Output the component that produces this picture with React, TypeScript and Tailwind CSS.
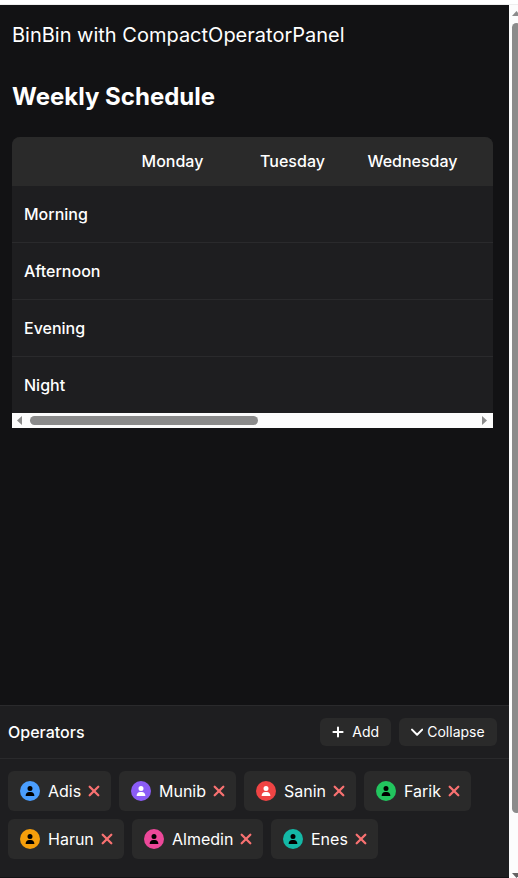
import { FaUser } from "react-icons/fa6";

const days = ["Monday", "Tuesday", "Wednesday"];
const shifts = ["Morning", "Afternoon", "Evening", "Night"];
const operators = [
  { name: "Adis", width: "w-[103px]", dot: "bg-[#4a9eff] text-black" },
  { name: "Munib", width: "w-[117px]", dot: "bg-[#8b5cf6] text-white" },
  { name: "Sanin", width: "w-[112px]", dot: "bg-[#ef4444] text-white" },
  { name: "Farik", width: "w-[107px]", dot: "bg-[#22c55e] text-black" },
  { name: "Harun", width: "w-[116px]", dot: "bg-[#f59e0b] text-black" },
  { name: "Almedin", width: "w-[131px]", dot: "bg-[#ec4899] text-black" },
  { name: "Enes", width: "w-[107px]", dot: "bg-[#14b8a6] text-black" },
];

function PlusIcon() {
  return (
    <svg className="h-[14px] w-[12.25px] shrink-0" viewBox="0 0 12.25 14" fill="none" stroke="currentColor" strokeWidth="2" strokeLinecap="round">
      <path d="M6 2.4v9.2M1.4 7h9.2" />
    </svg>
  );
}

function ChevronIcon() {
  return (
    <svg className="h-[14px] w-[12.25px] shrink-0" viewBox="0 0 12.25 14" fill="none" stroke="currentColor" strokeWidth="2" strokeLinecap="round" strokeLinejoin="round">
      <path d="m1 4.6 5.1 5.1 5.1-5.1" />
    </svg>
  );
}

function CrossIcon() {
  return (
    <svg className="ml-1 size-[18px] shrink-0 text-[#f87171]" viewBox="0 0 18 18" fill="none" stroke="currentColor" strokeWidth="2.3" strokeLinecap="round">
      <path d="m4.7 4.7 8.6 8.6m0-8.6-8.6 8.6" />
    </svg>
  );
}

function Schedule() {
  return (
    <div className="mt-6 ml-3 w-[481px] overflow-hidden rounded-t-lg bg-[#1e1e20] font-medium">
      <div className="flex h-[49px] items-center bg-[#2a2a2a] pb-px pl-[100.5px]">
        {days.map((d) => (
          <div key={d} className="w-[120px] text-center">{d}</div>
        ))}
      </div>
      {shifts.map((s, i) => (
        <div key={s} className={`flex items-center pl-3 ${i < 3 ? "h-[57px] border-b border-[#2a2a2c]" : "h-[56px]"}`}>{s}</div>
      ))}
      <div className="flex h-[15px] items-center bg-[#fcfcfc] text-[#8b8b8b]">
        <svg width="18" height="15" fill="currentColor"><path d="M5 7.5 10 3v9z" /></svg>
        <div className="h-[9px] w-[228px] rounded-full bg-[#8b8b8b]" />
        <svg className="ml-auto" width="18" height="15" fill="currentColor"><path d="M12 7.5 7 3v9z" /></svg>
      </div>
    </div>
  );
}

function OperatorPanel() {
  return (
    <section className="mt-auto h-[173px] shrink-0 border-y border-t-[#2a2a2c] border-b-[#121214] bg-[#1e1e20]">
      <header className="flex h-[53px] items-center gap-2 border-b border-[#2a2a2c] pr-3 pl-2">
        <h3 className="mr-auto font-medium">Operators</h3>
        <button className="flex h-7 w-[71px] items-center gap-2 rounded-md bg-[#2a2a2a] pl-3 text-sm">
          <PlusIcon />Add
        </button>
        <button className="flex h-7 w-[98px] items-center gap-1 rounded-md bg-[#2a2a2a] pl-3 text-sm">
          <ChevronIcon />Collapse
        </button>
      </header>
      <div className="flex flex-wrap gap-2 px-2 pt-3">
        {operators.map((o) => (
          <div key={o.name} className={`flex h-10 items-center rounded-md bg-[#2a2a2a] pl-3 ${o.width}`}>
            <span className={`mr-2 flex size-5 shrink-0 items-center justify-center rounded-full ${o.dot}`}>
              <FaUser className="size-[10px]" />
            </span>
            {o.name}
            <CrossIcon />
          </div>
        ))}
      </div>
    </section>
  );
}

export default function App() {
  return (
    <div className="flex h-[878px] w-[518px] flex-col overflow-hidden bg-white font-['Inter',sans-serif] text-base text-white">
      <div className="h-[5px] shrink-0 border-b border-[#eeeeee] bg-white" />
      <div className="flex min-h-0 flex-1">
        <main className="flex w-[509px] flex-col bg-[#121214]">
          <p className="mt-4 ml-3 text-xl leading-7">BinBin with CompactOperatorPanel</p>
          <h1 className="mt-8 ml-3 text-2xl leading-8 font-bold">Weekly Schedule</h1>
          <Schedule />
          <OperatorPanel />
        </main>
        <aside className="flex w-[9px] flex-col overflow-hidden bg-[#fcfcfc] pl-[3px]">
          <svg className="shrink-0" width="9" height="18" fill="#8b8b8b"><path d="M0 11 4.5 6 9 11z" /></svg>
          <div className="h-[790px] w-[9px] shrink-0 rounded-full bg-[#8b8b8b]" />
          <svg className="mt-auto shrink-0" width="9" height="5" fill="#636363"><path d="M0 0H9L4.5 5z" /></svg>
        </aside>
      </div>
    </div>
  );
}
